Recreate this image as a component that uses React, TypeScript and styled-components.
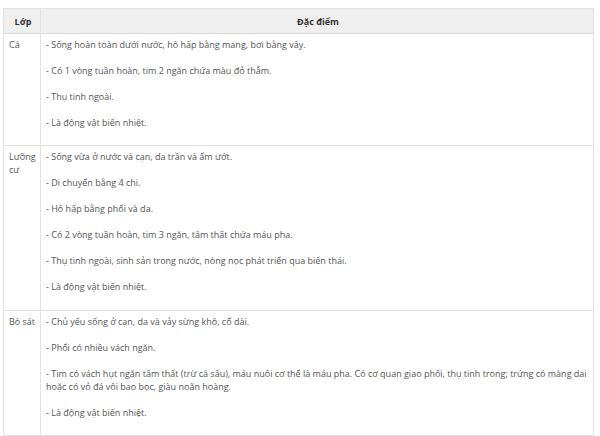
import React from "react";
import styled, { createGlobalStyle } from "styled-components";

const Global = createGlobalStyle`
  html, body { margin: 0; padding: 0; background: #fff; }
  body { font-family: "Open Sans", "Noto Sans", sans-serif; }
`;

const Page = styled.div`
  padding: 8px 7px 0 3px;
`;

const Table = styled.table`
  width: 591px;
  table-layout: fixed;
  border-collapse: collapse;
  font-size: 9px;
  line-height: 13px;
  color: #555;
`;

const HeadCell = styled.th<{ $w?: number }>`
  box-sizing: border-box;
  background: #efefef;
  border: 1px solid #e2e2e2;
  border-bottom: 1px solid #dcdcdc;
  padding: 5.5px 3px 5px 5px;
  font-weight: 700;
  color: #333;
  text-align: center;
  width: ${(p) => (p.$w ? `${p.$w}px` : "auto")};
`;

const Cell = styled.td`
  border: 1px solid #e2e2e2;
  padding: 4px 3px 3.5px 5px;
  vertical-align: top;
  text-align: left;
`;

const Para = styled.p`
  margin: 0 0 13px 0;
`;

const rows: { name: string; items: string[] }[] = [
  {
    name: "Cá",
    items: [
      "- Sống hoàn toàn dưới nước, hô hấp bằng mang, bơi bằng vây.",
      "- Có 1 vòng tuần hoàn, tim 2 ngăn chứa màu đỏ thẫm.",
      "- Thụ tinh ngoài.",
      "- Là động vật biến nhiệt.",
    ],
  },
  {
    name: "Lưỡng cư",
    items: [
      "- Sống vừa ở nước và cạn, da trần và ẩm ướt.",
      "- Di chuyển bằng 4 chi.",
      "- Hô hấp bằng phổi và da.",
      "- Có 2 vòng tuần hoàn, tim 3 ngăn, tâm thất chứa máu pha.",
      "- Thụ tinh ngoài, sinh sản trong nước, nòng nọc phát triển qua biến thái.",
      "- Là động vật biến nhiệt.",
    ],
  },
  {
    name: "Bò sát",
    items: [
      "- Chủ yếu sống ở cạn, da và vảy sừng khô, cổ dài.",
      "- Phổi có nhiều vách ngăn.",
      "- Tim có vách hụt ngăn tâm thất (trừ cá sấu), máu nuôi cơ thể là máu pha. Có cơ quan giao phối, thụ tinh trong; trứng có màng dai hoặc có vỏ đá vôi bao bọc, giàu noãn hoàng.",
      "- Là động vật biến nhiệt.",
    ],
  },
];

export default function App() {
  return (
    <Page>
      <Global />
      <Table>
        <thead>
          <tr>
            <HeadCell $w={37}>Lớp</HeadCell>
            <HeadCell>Đặc điểm</HeadCell>
          </tr>
        </thead>
        <tbody>
          {rows.map((r) => (
            <tr key={r.name}>
              <Cell>{r.name}</Cell>
              <Cell>
                {r.items.map((t, i) => (
                  <Para key={i}>{t}</Para>
                ))}
              </Cell>
            </tr>
          ))}
        </tbody>
      </Table>
    </Page>
  );
}
